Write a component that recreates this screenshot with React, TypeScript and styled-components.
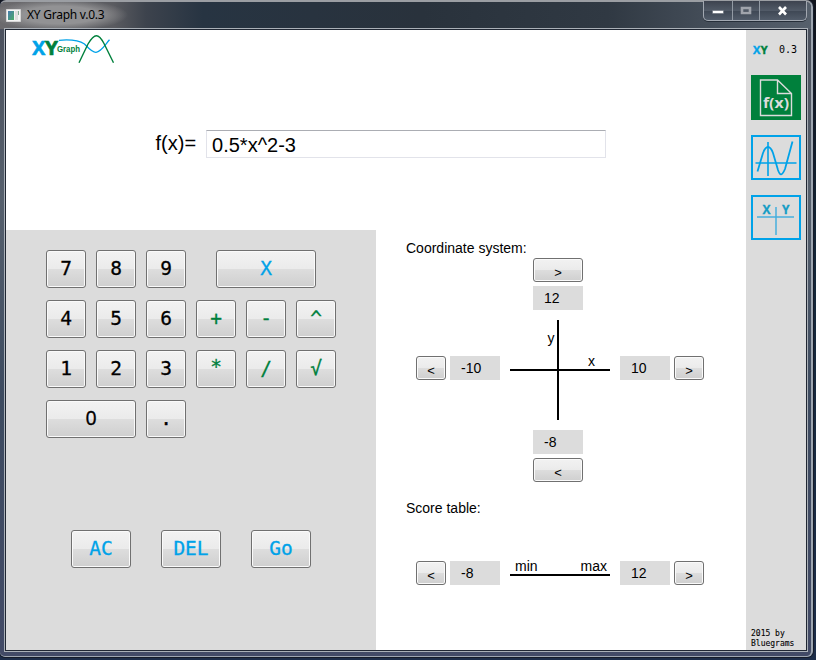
import React from "react";
import styled, { createGlobalStyle } from "styled-components";

const BLUE = "#00a2e8";
const GREEN = "#00803c";

const GlobalStyle = createGlobalStyle`
  * { box-sizing: border-box; }
  body { margin: 0; overflow: hidden; font-family: "Liberation Sans", Arial, sans-serif; color: #000; }
  button { font: inherit; padding: 0; margin: 0; }
`;

const Desktop = styled.div`
  width: 816px;
  height: 660px;
  background: linear-gradient(#10131c, #142638 40%, #1d2d49);
`;

const WindowFrame = styled.div`
  position: relative;
  width: 813px;
  height: 657px;
  display: flex;
  flex-direction: column;
  border: solid #9ea6b0;
  border-width: 2px 2px 1px 0;
  border-top-color: #9b9ea3;
  border-radius: 6px 7px 6px 5px;
  background: linear-gradient(#4a4f5b, #56606d 30%, #3d4b60 60%, #424a66);
  box-shadow: 0 0 0 1px #151b29;
`;

const TitleBar = styled.header`
  height: 27px;
  display: flex;
  align-items: flex-start;
  justify-content: space-between;
  border-radius: 5px 5px 0 0;
  padding-right: 4px;
  background:
    radial-gradient(ellipse 68px 16px at 60px 13px, #929294 55%, rgba(130, 130, 132, 0) 100%),
    linear-gradient(90deg, #6b6a6d, #5a5b60 14%, #3d434d 18%, #273442 25%, #29323c 52%, #303943 75%, #4c5561 92%, #56606c);
`;

const TitleGroup = styled.div`
  display: flex;
  align-items: center;
  gap: 6px;
  padding: 5px 0 0 6px;
  font: 12px/16px "Noto Sans", sans-serif;
  letter-spacing: -0.25px;
`;

const WindowControls = styled.div`
  display: flex;
  height: 20px;
  margin-top: -1px;
  border: 1px solid #a2a8b1;
  border-top: 0;
  border-radius: 0 0 5px 5px;
  background: linear-gradient(#3d434f, #515a67 50%, #3e4754 51%, #525c6a);
  box-shadow: 0 1px 0 #262e39;
`;

const ControlButton = styled.button<{ $width: number }>`
  width: ${(p) => p.$width}px;
  height: 19px;
  border: 0;
  border-right: 1px solid #929aa4;
  background: transparent;
  &:last-child { border-right: 0; }
  svg { display: block; margin: auto; }
`;

const Client = styled.main`
  width: 802px;
  height: 622px;
  margin-left: 5px;
  display: grid;
  grid-template-columns: 740px 60px;
  border: 1px solid #202733;
  background: #fff;
  box-shadow: 0 0 0 1px #aab0b7;
`;

const Workspace = styled.div`
  display: grid;
  grid-template-rows: 200px 420px;
`;

const FunctionPanel = styled.section`
  display: flex;
  flex-direction: column;
  background: #fff;
`;

const Logo = styled.svg`
  display: block;
  margin: 4px 0 0 24px;
`;

const FormulaRow = styled.label`
  display: flex;
  align-items: center;
  gap: 10px;
  margin: 60px 0 0 149.5px;
  font-size: 20px;
  line-height: 26px;
  span { margin-bottom: 2px; }
`;

const FormulaInput = styled.input`
  width: 400px;
  height: 28px;
  padding: 2px 5px 0;
  border: 1px solid #e2e3ea;
  border-top-color: #abadb3;
  outline: 0;
  font: 20px "Liberation Sans", Arial, sans-serif;
`;

const Panels = styled.div`
  display: grid;
  grid-template-columns: 370px 370px;
`;

const Keypad = styled.section`
  display: flex;
  flex-direction: column;
  gap: 12px;
  padding: 20px 0 0 40px;
  background: #dcdcdc;
`;

const KeyRow = styled.div<{ $gap?: number }>`
  display: flex;
  gap: ${(p) => p.$gap ?? 10}px;
`;

const ActionRow = styled(KeyRow)`
  margin: 80px 0 0 25px;
`;

const BaseButton = styled.button`
  border: 1px solid #707070;
  border-radius: 3px;
  background: linear-gradient(#f2f2f2, #ebebeb 49%, #dddddd 51%, #cfcfcf);
  box-shadow: inset 0 0 0 1px #fafafa;
  flex: none;
`;

const Key = styled(BaseButton)<{ $width?: number; $color?: string; $offset?: number; $plain?: boolean; $drop?: number }>`
  width: ${(p) => p.$width ?? 40}px;
  height: 38px;
  margin-left: ${(p) => p.$offset ?? 0}px;
  padding-top: ${(p) => Math.max(p.$drop ?? 0, 0)}px;
  padding-bottom: ${(p) => Math.max(-(p.$drop ?? 0), 0)}px;
  color: ${(p) => p.$color ?? "#000"};
  font: 19.5px/24px ${(p) => (p.$plain ? '"Noto Sans"' : '"DejaVu Sans Mono"')}, monospace;
  -webkit-text-stroke: 0.3px currentColor;
`;

const Settings = styled.section`
  padding: 10px 0 0 30px;
  font-size: 14px;
  line-height: 16px;
`;

const Heading = styled.h2<{ $top?: number }>`
  margin: ${(p) => p.$top ?? 0}px 0 0;
  font: inherit;
`;

const AxisStack = styled.div<{ $top: number }>`
  width: 50px;
  display: flex;
  flex-direction: column;
  gap: 4px;
  margin: ${(p) => p.$top}px 0 0 127px;
`;

const RangeRow = styled.div<{ $top: number }>`
  display: flex;
  align-items: center;
  gap: 10px;
  margin: ${(p) => p.$top}px 0 0 10px;
`;

const SideGroup = styled.div<{ $lift?: number }>`
  display: flex;
  gap: 4px;
  margin-bottom: ${(p) => p.$lift ?? 0}px;
`;

const StepButton = styled(BaseButton)<{ $width?: number }>`
  width: ${(p) => p.$width ?? 30}px;
  height: 24px;
  padding-top: 5px;
  font-size: 13px;
  line-height: 16px;
`;

const ValueBox = styled.output`
  width: 50px;
  height: 24px;
  padding-left: 11px;
  background: #dcdcdc;
  line-height: 25px;
`;

const AxisDrawing = styled.svg`
  display: block;
  overflow: visible;
  font: 14px "Liberation Sans", Arial, sans-serif;
`;

const Scale = styled.div`
  width: 100px;
  height: 24px;
  display: flex;
  flex-direction: column;
`;

const ScaleLabels = styled.div`
  height: 16px;
  display: flex;
  justify-content: space-between;
  padding: 0 3px 0 5px;
  margin: -3px 0 0;
`;

const ScaleLine = styled.div`
  height: 2px;
  background: #000;
`;

const Sidebar = styled.aside`
  display: flex;
  flex-direction: column;
  padding: 13px 5px 1px;
  background: #dcdcdc;
  font-family: "DejaVu Sans Mono", monospace;
`;

const Version = styled.div`
  height: 14px;
  display: flex;
  align-items: center;
  justify-content: space-between;
  padding: 0 4px 0 2px;
  font: 10px/14px "DejaVu Sans Mono", monospace;
  margin-bottom: 18px;
`;

const MiniBrand = styled.b<{ $color: string }>`
  color: ${(p) => p.$color};
  font: bold 11px/14px "Open Sans", sans-serif;
  letter-spacing: 0.4px;
  -webkit-text-stroke: 0.4px currentColor;
`;

const ModeButton = styled.button<{ $active?: boolean }>`
  width: 50px;
  height: 45px;
  margin-bottom: 15px;
  border: ${(p) => (p.$active ? "0" : `2px solid ${BLUE}`)};
  background: ${(p) => (p.$active ? GREEN : "transparent")};
  svg { display: block; }
`;

const Credit = styled.footer`
  margin-top: auto;
  font-size: 8px;
  line-height: 10px;
  white-space: nowrap;
  -webkit-text-stroke: 0.1px currentColor;
`;

type Step = { value: string; arrow: string };

const LowSide = ({ value, arrow, lift }: Step & { lift?: number }) => (
  <SideGroup $lift={lift}>
    <StepButton>{arrow}</StepButton>
    <ValueBox>{value}</ValueBox>
  </SideGroup>
);

const HighSide = ({ value, arrow, lift }: Step & { lift?: number }) => (
  <SideGroup $lift={lift}>
    <ValueBox>{value}</ValueBox>
    <StepButton>{arrow}</StepButton>
  </SideGroup>
);

const glyphDrop: Record<string, number> = { "^": 0, "*": -4, "√": 0 };

const keys = (labels: string[], color?: string) =>
  labels.map((label) => <Key key={label} $color={color} $drop={glyphDrop[label] ?? 0}>{label}</Key>);

const LogoMark = () => (
  <Logo width="86" height="36" viewBox="30 34 86 36">
    <g fontFamily="Open Sans, sans-serif" fontWeight="bold" strokeWidth=".6">
      <text x="32.2" y="55" fontSize="20" textLength="13" lengthAdjust="spacingAndGlyphs" fill={BLUE} stroke={BLUE}>X</text>
      <text x="45" y="55" fontSize="20" textLength="13" lengthAdjust="spacingAndGlyphs" fill={GREEN} stroke={GREEN}>Y</text>
    </g>
    <text x="57" y="52" fontFamily="Liberation Sans, sans-serif" fontWeight="bold" fontSize="8.2" textLength="23" lengthAdjust="spacingAndGlyphs" fill={GREEN}>Graph</text>
    <path d="M59 40.3C68 39.5 78 39.8 84.5 44C88 47.5 92 52.5 96 52.3C101 52 105 45 109.5 39.8" fill="none" stroke={BLUE} strokeWidth="1.3" />
    <path d="M79 62.7L88 44C94.5 33 98.5 33 104 43.5L113.5 62.7" fill="none" stroke={GREEN} strokeWidth="1.4" />
  </Logo>
);

export default function App() {
  return (
    <Desktop>
      <GlobalStyle />
      <WindowFrame>
        <TitleBar>
          <TitleGroup>
            <svg width="15" height="13" viewBox="0 0 15 13">
              <defs>
                <linearGradient id="pane" x2="1" y2="1">
                  <stop stopColor="#467bb0" /><stop offset="1" stopColor="#4bab66" />
                </linearGradient>
              </defs>
              <path d="M.5.5h14v12H.5z" fill="#f4f4f4" stroke="#d6d6d6" />
              <path d="M2 2h6v9H2z" fill="url(#pane)" />
              <path d="M9 2h3v9H9z" fill="#dedede" /><path d="M12 2h1v4h-1z" fill="#83ad93" />
            </svg>
            <span>XY Graph v.0.3</span>
          </TitleGroup>
          <WindowControls>
            <ControlButton $width={29} aria-label="Minimize">
              <svg width="12" height="9" viewBox="0 -4 12 9"><path d="M.5.5h11v3H.5z" fill="#fff" stroke="#59616c" strokeWidth=".5" /></svg>
            </ControlButton>
            <ControlButton $width={27} aria-label="Maximize">
              <svg width="12" height="10"><path d="M2 2h8v5H2z" fill="none" stroke="#a0a4ac" strokeWidth="2.6" /></svg>
            </ControlButton>
            <ControlButton $width={46} aria-label="Close">
              <svg width="12" height="10"><path d="M2 1L9 8.5M9 1L2 8.5" stroke="#fff" strokeWidth="2.6" /></svg>
            </ControlButton>
          </WindowControls>
        </TitleBar>
        <Client>
          <Workspace>
            <FunctionPanel>
              <LogoMark />
              <FormulaRow>
                <span>f(x)=</span>
                <FormulaInput defaultValue="0.5*x^2-3" />
              </FormulaRow>
            </FunctionPanel>
            <Panels>
              <Keypad>
                <KeyRow>{keys(["7", "8", "9"])}<Key $width={100} $offset={20} $color={BLUE}>X</Key></KeyRow>
                <KeyRow>{keys(["4", "5", "6"])}{keys(["+", "-", "^"], GREEN)}</KeyRow>
                <KeyRow>{keys(["1", "2", "3"])}{keys(["*", "/", "√"], GREEN)}</KeyRow>
                <KeyRow><Key $width={90} $plain $drop={-2}>0</Key><Key>.</Key></KeyRow>
                <ActionRow $gap={30}>
                  {["AC", "DEL", "Go"].map((label) => (
                    <Key key={label} $width={60} $color={BLUE}>{label}</Key>
                  ))}
                </ActionRow>
              </Keypad>
              <Settings>
                <Heading>Coordinate system:</Heading>
                <AxisStack $top={2}>
                  <StepButton $width={50}>&gt;</StepButton>
                  <ValueBox>12</ValueBox>
                </AxisStack>
                <RangeRow $top={10}>
                  <LowSide value="-10" arrow="<" lift={4} />
                  <AxisDrawing width="100" height="100">
                    <path d="M48 0V100M0 50H100" stroke="#000" strokeWidth="2" />
                    <text x="37.5" y="23">y</text>
                    <text x="78" y="46">x</text>
                  </AxisDrawing>
                  <HighSide value="10" arrow=">" lift={4} />
                </RangeRow>
                <AxisStack $top={10}>
                  <ValueBox>-8</ValueBox>
                  <StepButton $width={50}>&lt;</StepButton>
                </AxisStack>
                <Heading $top={18}>Score table:</Heading>
                <RangeRow $top={45}>
                  <LowSide value="-8" arrow="<" />
                  <Scale>
                    <ScaleLabels><span>min</span><span>max</span></ScaleLabels>
                    <ScaleLine />
                  </Scale>
                  <HighSide value="12" arrow=">" />
                </RangeRow>
              </Settings>
            </Panels>
          </Workspace>
          <Sidebar>
            <Version>
              <span><MiniBrand $color={BLUE}>X</MiniBrand><MiniBrand $color={GREEN}>Y</MiniBrand></span>
              <span>0.3</span>
            </Version>
            <ModeButton $active>
              <svg width="50" height="45">
                <path d="M9.5 5H26.5L40.5 18.5V40.5H9.5ZM26.5 5V18.5H40.5" fill="none" stroke="#dcdcdc" strokeWidth="1.4" />
                <text x="12" y="33" fill="#dcdcdc" fontFamily="Open Sans, sans-serif" fontWeight="bold" fontSize="14" textLength="26" lengthAdjust="spacingAndGlyphs">f(x)</text>
              </svg>
            </ModeButton>
            <ModeButton>
              <svg width="46" height="41">
                <path d="M2.5 26H43.5M15 5V39" stroke={BLUE} strokeWidth="1.6" />
                <path d="M4.5 34.5L10 16C13 8 17 8 20 16L25 33C27 39 29 39 32 32L39.5 4.5" fill="none" stroke={BLUE} strokeWidth="1.8" />
              </svg>
            </ModeButton>
            <ModeButton>
              <svg width="46" height="41">
                <path d="M4 20H41M23 10V38" stroke="#45afdd" strokeWidth="1.5" />
                <g fill="#139cc5" stroke="#139cc5" strokeWidth=".3" fontFamily="Open Sans, sans-serif" fontWeight="bold" fontSize="12">
                  <text x="9.5" y="17">X</text><text x="29" y="17">Y</text>
                </g>
              </svg>
            </ModeButton>
            <Credit>2015 by<br />Bluegrams</Credit>
          </Sidebar>
        </Client>
      </WindowFrame>
    </Desktop>
  );
}
